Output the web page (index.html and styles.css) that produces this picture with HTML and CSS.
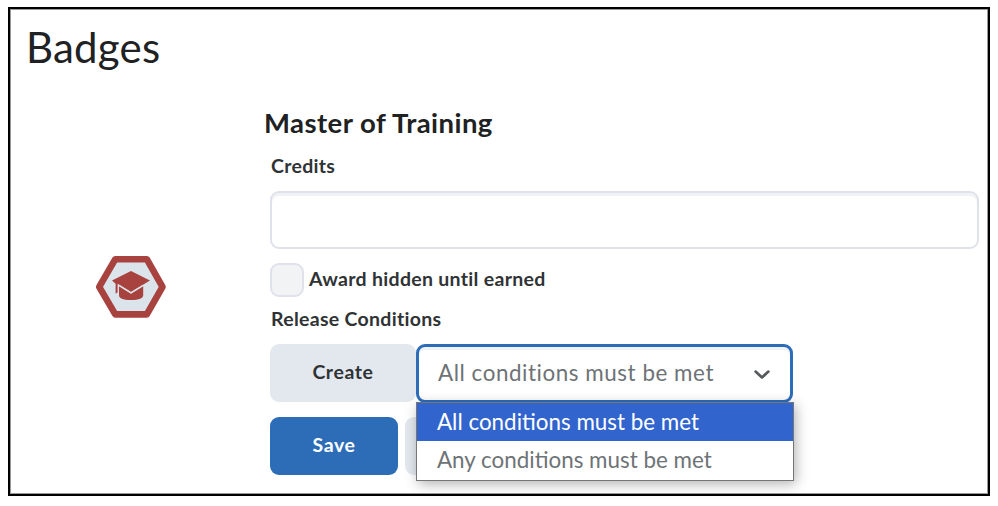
FILE: index.html
```html
<!DOCTYPE html>
<html lang="en">
<head>
  <meta charset="UTF-8">
  <meta name="viewport" content="width=device-width, initial-scale=1.0">
  <title>Badges</title>
  <link rel="stylesheet" href="styles.css">
</head>
<body>

<div class="page">
  <h1>Badges</h1>

  <div class="award">
    <div class="award-icon">
      <svg width="72" height="64" viewBox="0 0 72 64">
        <path d="M20.3 4.2h31.5L67.5 31.8 51.8 59.4H20.3L4.2 31.8z" fill="#dae4ea" stroke="#a8423e" stroke-width="6.6" stroke-linejoin="round"/>
        <path d="M36 16L55 25.5 36 37 22.6 28.7v8.6l-2 1.5v-10L17 25.5z" fill="#a8423e"/>
        <path d="M24 31.2l12 7.5L48.2 31.2v9c0 3-4 4.8-12.2 4.8s-12-1.8-12-4.8z" fill="#a8423e"/>
        <path d="M24 30.2l12 7.5 12.2-7.5" fill="none" stroke="#dae4ea" stroke-width="1.3"/>
      </svg>
    </div>

    <div class="award-form">
      <h2>Master of Training</h2>
      <label class="label" for="credits">Credits</label>
      <input class="input-box" type="text" id="credits">

      <div class="check-row">
        <span class="checkbox"></span>
        <span class="label">Award hidden until earned</span>
      </div>

      <div class="label label-release">Release Conditions</div>

      <div class="condition-row">
        <button class="button button-create">Create</button>
        <div class="select">
          <span class="select-text">All conditions must be met</span>
          <svg class="chevron" width="18" height="12" viewBox="0 0 18 12">
            <path d="M2.6 2.6L9 8.4l6.4-5.8" fill="none" stroke="#565a5c" stroke-width="2.7" stroke-linecap="round" stroke-linejoin="round"/>
          </svg>
          <div class="menu">
            <div class="option option-active">All conditions must be met</div>
            <div class="option">Any conditions must be met</div>
          </div>
        </div>
      </div>

      <div class="button-row">
        <button class="button button-save">Save</button>
        <button class="button button-cancel"></button>
      </div>
    </div>
  </div>
</div>

</body>
</html>
```

FILE: styles.css
```css
* {
  box-sizing: border-box;
}
body {
  margin: 0;
  padding: 7px 8px;
  background-color: #fff;
  color: #202122;
  font-family: Lato, sans-serif;
}
.page {
  width: 982px;
  height: 489px;
  padding: 12px 9px 0 16px;
  border: 2px solid #000;
  box-shadow: inset 0 0 0 1px #999;
}
h1 {
  margin: 0;
  font-size: 42px;
  font-weight: 400;
  line-height: 52px;
  letter-spacing: 0.2px;
}
.award {
  display: flex;
}
.award-icon {
  width: 244px;
  padding: 182px 0 0 69px;
}
.award-form {
  width: 709px;
  padding-top: 32px;
}
h2 {
  margin: 0 0 0 -6px;
  font-size: 27.5px;
  font-weight: 700;
  line-height: 36px;
  letter-spacing: 0.45px;
}
.label {
  display: block;
  font-size: 19.5px;
  font-weight: 700;
  line-height: 24px;
  letter-spacing: 0.3px;
  color: #303335;
}
label.label {
  margin-top: 13px;
  padding-left: 1px;
}
.input-box {
  display: block;
  width: 709px;
  height: 58px;
  margin-top: 13px;
  border: 2px solid #dfe2ea;
  border-radius: 9px;
  box-shadow: inset 0 3px 0 #f1f2f5;
}
.check-row {
  display: flex;
  align-items: center;
  gap: 5px;
  margin-top: 14px;
}
.checkbox {
  width: 34px;
  height: 34px;
  background-color: #f1f3f5;
  border: 2px solid #dfe2ea;
  border-radius: 9px;
}
.check-row .label {
  margin-top: -2px;
}
.label-release {
  margin-top: 10px;
  padding-left: 1px;
}
.condition-row {
  display: flex;
  margin-top: 13px;
}
.button {
  height: 58px;
  padding: 0 0 3px;
  border: none;
  border-radius: 9px;
  font-family: Lato, sans-serif;
  font-size: 19.5px;
  font-weight: 700;
  letter-spacing: 0.6px;
}
.button-create {
  width: 146px;
  background-color: #e3e8ef;
  color: #303335;
}
/* Select with its open menu */
.select {
  position: relative;
  display: flex;
  align-items: center;
  justify-content: space-between;
  width: 377px;
  height: 59px;
  padding: 0 19px 3px 19px;
  border: 3px solid #2d6db8;
  border-radius: 9px;
  box-shadow: inset 0 3px 0 #f1f2f5;
  font-size: 22.4px;
  color: #6e7376;
}
.select-text {
  letter-spacing: 0.55px;
}
.chevron {
  margin-top: 5px;
}
.menu {
  position: absolute;
  top: 55px;
  left: -3px;
  width: 378px;
  height: 79px;
  border: 1px solid #767676;
  background-color: #fff;
  box-shadow: 2px 3px 12px rgba(0, 0, 0, 0.3);
}
.option {
  height: 38px;
  padding-left: 20px;
  line-height: 37px;
}
.option-active {
  background-color: #3264cd;
  color: #fff;
}
.button-row {
  display: flex;
  gap: 7px;
  margin-top: 14px;
}
.button-save {
  width: 128px;
  background-color: #2d6db8;
  color: #fff;
}
.button-cancel {
  width: 146px;
  background-color: #e3e8ef;
}
```
